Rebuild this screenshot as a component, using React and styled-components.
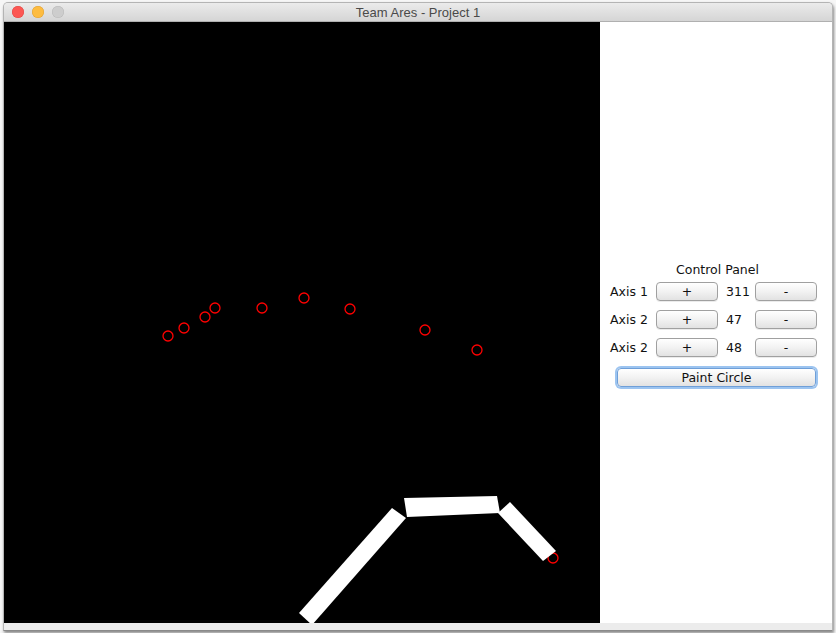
import { Fragment } from 'react';
import styled, { createGlobalStyle } from 'styled-components';

const GlobalStyle = createGlobalStyle`
  html, body {
    margin: 0;
    padding: 0;
    background: #f6f6f6;
  }
  body {
    width: 836px;
    height: 633px;
    overflow: hidden;
  }
`;

const Desk = styled.div`
  padding: 2px 3px 0 3px;
`;

const Window = styled.div`
  width: 828px;
  border: 1px solid #b4b4b4;
  border-bottom-color: #8a8a8a;
  border-radius: 5px 5px 0 0;
  background: #ececec;
  box-shadow: 1px 2px 3px rgba(0, 0, 0, 0.45);
  overflow: hidden;
`;

const TitleBar = styled.div`
  height: 19px;
  display: flex;
  align-items: center;
  position: relative;
  background: linear-gradient(#ebebeb, #d5d5d5);
  border-bottom: 1px solid #b0b0b0;
  box-sizing: border-box;
`;

const Lights = styled.div`
  display: flex;
  gap: 8px;
  padding-left: 8px;
`;

const Light = styled.span`
  width: 12px;
  height: 12px;
  border-radius: 50%;
  background: ${(p) => p.$color};
  box-shadow: inset 0 0 0 0.5px ${(p) => p.$edge};
`;

const Title = styled.div`
  position: absolute;
  left: 0;
  right: 0;
  text-align: center;
  font: 13px "Liberation Sans", Arial, sans-serif;
  color: #4a4a4a;
  pointer-events: none;
`;

const Body = styled.div`
  display: flex;
  height: 601px;
`;

const Footer = styled.div`
  height: 7px;
  background: #ececec;
`;

const Canvas = styled.svg`
  display: block;
  width: 596px;
  height: 601px;
  background: #000;
  flex: none;
`;

const Side = styled.div`
  flex: 1;
  background: #fff;
  padding-top: 240px;
  padding-left: 10px;
  box-sizing: border-box;
`;

const Panel = styled.div`
  width: 207px;
  font: 12.5px "DejaVu Sans", "Lucida Grande", sans-serif;
  color: #111;
`;

const PanelTitle = styled.div`
  text-align: center;
  padding-left: 8px;
  height: 20px;
  line-height: 16px;
`;

const Grid = styled.div`
  display: grid;
  grid-template-columns: 46px 62px 37px 62px;
  row-gap: 9px;
  align-items: center;
`;

const Label = styled.span`
  white-space: nowrap;
`;

const Value = styled.span`
  padding-left: 8px;
`;

const Button = styled.button`
  height: 19px;
  padding: 0;
  font: 12.5px "DejaVu Sans", "Lucida Grande", sans-serif;
  color: #111;
  background: linear-gradient(#ffffff, #f2f2f2 50%, #e2e2e2);
  border: 1px solid #a0a0a0;
  border-radius: 4px;
  box-shadow: 0 1px 0 rgba(0, 0, 0, 0.08);
`;

const PaintButton = styled(Button)`
  display: block;
  width: 199px;
  height: 19px;
  margin: 11px 0 0 7px;
  border-color: #6f9fd8;
  box-shadow: 0 0 0 2px #9cc4f0;
`;

const circles = [
  [168, 336], [184, 328], [205, 317], [215, 308], [262, 308],
  [304, 298], [350, 309], [425, 330], [477, 350], [553, 558],
];

const arm = [
  '299,613 312,625 406,518 392,508',
  '404,498 497,496 500,513 407,517',
  '510,502 556,551 543,561 498,513',
];

const rows = [
  ['Axis 1', 311],
  ['Axis 2', 47],
  ['Axis 2', 48],
];

export default function App() {
  return (
    <>
      <GlobalStyle />
      <Desk>
        <Window>
          <TitleBar>
            <Lights>
              <Light $color="#fc5753" $edge="#df4744" />
              <Light $color="#fdbc40" $edge="#de9f34" />
              <Light $color="#cdcdcd" $edge="#b8b8b8" />
            </Lights>
            <Title>Team Ares - Project 1</Title>
          </TitleBar>
          <Body>
            <Canvas viewBox="4 22 596 601">
              {circles.map(([x, y], i) => (
                <circle key={i} cx={x} cy={y} r="5" fill="none" stroke="#ff0000" strokeWidth="1.3" />
              ))}
              {arm.map((pts, i) => (
                <polygon key={i} points={pts} fill="#fff" />
              ))}
            </Canvas>
            <Side>
              <Panel>
                <PanelTitle>Control Panel</PanelTitle>
                <Grid>
                  {rows.map(([label, value], i) => (
                    <Fragment key={i}>
                      <Label>{label}</Label>
                      <Button>+</Button>
                      <Value>{value}</Value>
                      <Button>-</Button>
                    </Fragment>
                  ))}
                </Grid>
                <PaintButton>Paint Circle</PaintButton>
              </Panel>
            </Side>
          </Body>
          <Footer />
        </Window>
      </Desk>
    </>
  );
}
